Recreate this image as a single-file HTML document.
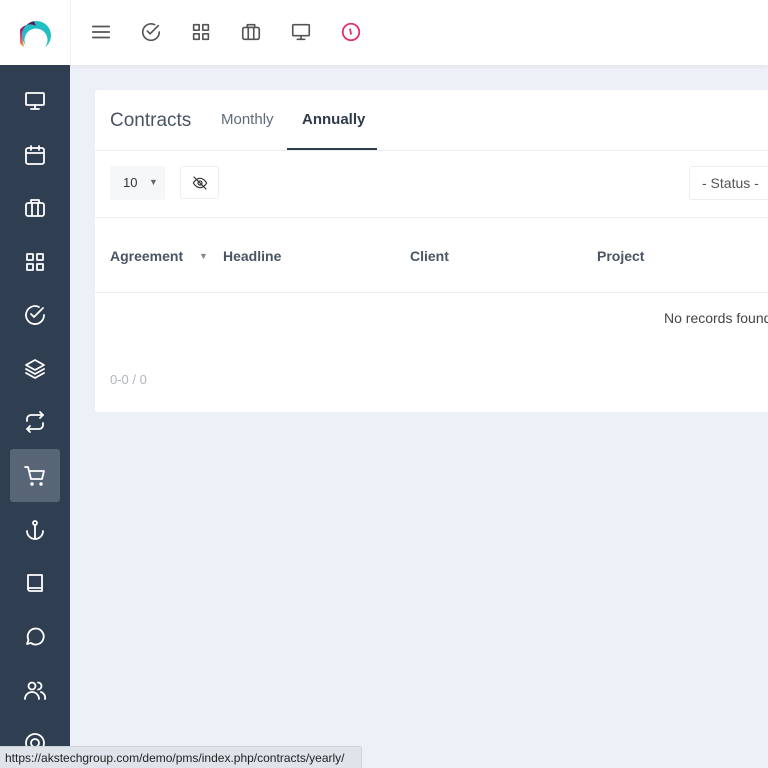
<!DOCTYPE html>
<html><head><style>
*{margin:0;padding:0;box-sizing:border-box}
body{width:768px;height:768px;overflow:hidden;background:#eef0f7;font-family:"Liberation Sans",sans-serif;position:relative}
.top{position:absolute;left:0;top:0;width:768px;height:65px;background:#fff;box-shadow:0 1px 4px rgba(0,0,0,.06)}
.side{position:absolute;left:0;top:65px;width:70px;height:703px;background:#2f3e50}
svg.i{position:absolute;width:24px;height:24px;fill:none;stroke-width:1.8;stroke-linecap:round;stroke-linejoin:round}
.side svg.i{stroke:#fff;left:23px}
.top svg.i{stroke:#555;width:22px;height:22px}
.act{position:absolute;left:10px;top:384px;width:50px;height:53px;background:#576576;border-radius:3px}
.card{position:absolute;left:95px;top:90px;width:700px;height:322px;background:#fff;border-radius:3px}
.t{position:absolute;white-space:nowrap}
</style></head><body>
<div class="top">
<svg style="position:absolute;left:20px;top:20px" width="32" height="32" viewBox="0 0 32 32"><defs><linearGradient id="h" x1="0" y1="0" x2="0" y2="1"><stop offset="0" stop-color="#3a1450"/><stop offset=".55" stop-color="#d8338a"/><stop offset="1" stop-color="#f5a03a"/></linearGradient></defs><circle cx="16.5" cy="15.5" r="14.5" fill="#1fbfc4"/><path d="M2 16 A14.5 14.5 0 0 1 14 1.2 L16 6 A10 10 0 0 0 4 27 Z" fill="url(#h)"/><circle cx="16" cy="20" r="11.5" fill="#fff"/></svg>
<div style="position:absolute;left:70px;top:0;width:1px;height:65px;background:#f0f1f4"></div>
<svg class="i" style="left:90px;top:21px" viewBox="0 0 24 24"><path d="M3 6h18M3 12h18M3 18h18"/></svg>
<svg class="i" style="left:140px;top:21px" viewBox="0 0 24 24"><path d="M21 12a9 9 0 1 1-5-8"/><path d="M8 11l3 3 9-9"/></svg>
<svg class="i" style="left:190px;top:21px" viewBox="0 0 24 24"><rect x="4" y="4" width="6" height="6"/><rect x="14" y="4" width="6" height="6"/><rect x="4" y="14" width="6" height="6"/><rect x="14" y="14" width="6" height="6"/></svg>
<svg class="i" style="left:240px;top:21px" viewBox="0 0 24 24"><rect x="3" y="7" width="18" height="13" rx="2"/><path d="M8 7V4h8v3M9 7v13M15 7v13"/></svg>
<svg class="i" style="left:290px;top:21px" viewBox="0 0 24 24"><rect x="3" y="4" width="18" height="12" rx="1"/><path d="M12 16v4M8 20h8"/></svg>
<svg class="i" style="left:340px;top:21px;stroke:#e0336f;stroke-width:2" viewBox="0 0 24 24"><circle cx="12" cy="12" r="9"/><path d="M11 9l1 5"/></svg>
</div>
<div class="side">
<div class="act"></div>
<svg class="i" style="top:24px" viewBox="0 0 24 24"><rect x="3" y="4" width="18" height="12" rx="1"/><path d="M12 16v4M8 20h8"/></svg>
<svg class="i" style="top:78px" viewBox="0 0 24 24"><rect x="3" y="5" width="18" height="16" rx="2"/><path d="M8 3v4M16 3v4M3 10h18"/></svg>
<svg class="i" style="top:131px" viewBox="0 0 24 24"><rect x="3" y="7" width="18" height="13" rx="2"/><path d="M8 7V4h8v3M9 7v13M15 7v13"/></svg>
<svg class="i" style="top:185px" viewBox="0 0 24 24"><rect x="4" y="4" width="6" height="6"/><rect x="14" y="4" width="6" height="6"/><rect x="4" y="14" width="6" height="6"/><rect x="14" y="14" width="6" height="6"/></svg>
<svg class="i" style="top:238px" viewBox="0 0 24 24"><path d="M21 12a9 9 0 1 1-5-8"/><path d="M8 11l3 3 9-9"/></svg>
<svg class="i" style="top:292px" viewBox="0 0 24 24"><path d="M12 3l9 5-9 5-9-5z"/><path d="M3 12l9 5 9-5M3 16l9 5 9-5"/></svg>
<svg class="i" style="top:345px" viewBox="0 0 24 24"><path d="M17 2l3 3-3 3"/><path d="M4 11V9a4 4 0 0 1 4-4h12"/><path d="M7 22l-3-3 3-3"/><path d="M20 13v2a4 4 0 0 1-4 4H4"/></svg>
<svg class="i" style="top:399px" viewBox="0 0 24 24"><path d="M2 3h3l3 12h11l2-8H7"/><circle cx="9" cy="20" r=".8"/><circle cx="18" cy="20" r=".8"/></svg>
<svg class="i" style="top:453px" viewBox="0 0 24 24"><circle cx="12" cy="5" r="2"/><path d="M12 7v14M4 13a8 8 0 0 0 16 0"/></svg>
<svg class="i" style="top:506px" viewBox="0 0 24 24"><path d="M5 4h14v16H7a2 2 0 0 1-2-2z"/><path d="M5 17h14"/></svg>
<svg class="i" style="top:559px" viewBox="0 0 24 24"><path d="M4 20l1.5-4A8 8 0 1 1 8 19z"/></svg>
<svg class="i" style="top:613px" viewBox="0 0 24 24"><circle cx="9" cy="8" r="3.5"/><path d="M2 21a7 7 0 0 1 14 0M15 4.5a3.5 3.5 0 0 1 0 7M18 14a6 6 0 0 1 4 7"/></svg>
<svg class="i" style="top:666px" viewBox="0 0 24 24"><circle cx="12" cy="12" r="9"/><circle cx="12" cy="12" r="4"/></svg>
</div>
<div class="card">
<div class="t" style="left:15px;top:20px;font-size:19px;color:#4a5563">Contracts</div>
<div class="t" style="left:126px;top:21px;font-size:15px;color:#5f6b7a">Monthly</div>
<div class="t" style="left:207px;top:21px;font-size:15px;font-weight:bold;color:#2f3b4b">Annually</div>
<div style="position:absolute;left:192px;top:58px;width:90px;height:2px;background:#2f3b4b"></div>
<div style="position:absolute;left:0;top:60px;width:700px;height:1px;background:#eceef2"></div>
<div style="position:absolute;left:15px;top:76px;width:55px;height:34px;background:#f6f7f9;border-radius:2px"></div>
<div class="t" style="left:28px;top:85px;font-size:13px;color:#333">10</div>
<div class="t" style="left:54px;top:87px;font-size:9px;color:#666">▼</div>
<div style="position:absolute;left:85px;top:76px;width:39px;height:33px;border:1px solid #eceef2;border-radius:3px"></div>
<svg style="position:absolute;left:96px;top:85px" width="18" height="16" viewBox="0 0 24 24" fill="none" stroke="#333" stroke-width="1.8" stroke-linecap="round"><path d="M2 12s4-7 10-7 10 7 10 7-4 7-10 7S2 12 2 12z"/><circle cx="12" cy="12" r="3"/><path d="M3 3l18 18"/></svg>
<div style="position:absolute;left:594px;top:76px;width:120px;height:34px;border:1px solid #eceef2;border-radius:3px"></div>
<div class="t" style="left:607px;top:85px;font-size:14px;color:#555">- Status -</div>
<div style="position:absolute;left:0;top:127px;width:700px;height:1px;background:#eceef2"></div>
<div class="t" style="left:15px;top:158px;font-size:14px;font-weight:bold;color:#4a5563">Agreement</div>
<div class="t" style="left:104px;top:161px;font-size:9px;color:#888">▼</div>
<div class="t" style="left:128px;top:158px;font-size:14px;font-weight:bold;color:#4a5563">Headline</div>
<div class="t" style="left:315px;top:158px;font-size:14px;font-weight:bold;color:#4a5563">Client</div>
<div class="t" style="left:502px;top:158px;font-size:14px;font-weight:bold;color:#4a5563">Project</div>
<div style="position:absolute;left:0;top:202px;width:700px;height:1px;background:#eceef2"></div>
<div class="t" style="left:569px;top:220px;font-size:14px;color:#444">No records found</div>
<div class="t" style="left:15px;top:282px;font-size:13px;color:#b0b6c0">0-0 / 0</div>
</div>
<div style="position:absolute;left:0;top:746px;width:362px;height:22px;background:#dfe3ea;border:1px solid #cfd4dc;border-left:0;border-bottom:0;border-radius:0 3px 0 0"></div>
<div class="t" style="left:5px;top:751px;font-size:12px;color:#222">https://akstechgroup.com/demo/pms/index.php/contracts/yearly/</div>
</body></html>
